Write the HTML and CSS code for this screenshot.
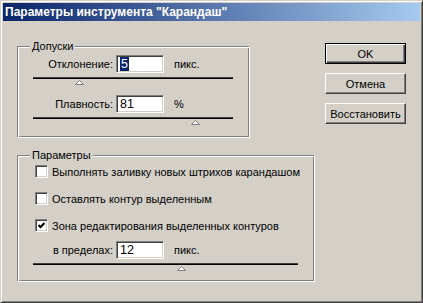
FILE: index.html
```html
<!DOCTYPE html>
<html lang="ru">
<head>
    <meta charset="UTF-8">
    <title>Параметры инструмента "Карандаш"</title>
    <link rel="stylesheet" href="styles.css">
</head>
<body>

    <div class="window">
        <div class="titlebar">Параметры инструмента "Карандаш"</div>

        <div class="dialog">
            <div class="groups">
                <!-- Tolerances -->
                <div class="group group-tolerance">
                    <div class="group-title">Допуски</div>

                    <div class="field-row first-row">
                        <span class="field-label">Отклонение:</span>
                        <div class="edit"><span class="selected">5</span></div>
                        <span class="unit">пикс.</span>
                    </div>
                    <div class="slider">
                        <span class="thumb" style="left: 23%"><svg width="9" height="5" viewBox="0 0 9 5"><polygon points="0.5,4.5 4.5,0.5 8.5,4.5" fill="#fff" stroke="#808080"/></svg></span>
                    </div>

                    <div class="field-row">
                        <span class="field-label">Плавность:</span>
                        <div class="edit">81</div>
                        <span class="unit">%</span>
                    </div>
                    <div class="slider">
                        <span class="thumb" style="left: 81%"><svg width="9" height="5" viewBox="0 0 9 5"><polygon points="0.5,4.5 4.5,0.5 8.5,4.5" fill="#fff" stroke="#808080"/></svg></span>
                    </div>
                </div>

                <!-- Options -->
                <div class="group group-params">
                    <div class="group-title">Параметры</div>

                    <div class="check-row first-row">
                        <span class="checkbox"></span>
                        <span>Выполнять заливку новых штрихов карандашом</span>
                    </div>
                    <div class="check-row">
                        <span class="checkbox"></span>
                        <span>Оставлять контур выделенным</span>
                    </div>
                    <div class="check-row">
                        <span class="checkbox checked"><svg width="7" height="7" viewBox="0 0 7 7"><polyline points="0.5,3 2.5,5 6.5,1" fill="none" stroke="#000" stroke-width="2"/></svg></span>
                        <span>Зона редактирования выделенных контуров</span>
                    </div>

                    <div class="field-row range-row">
                        <span class="field-label">в пределах:</span>
                        <div class="edit">12</div>
                        <span class="unit">пикс.</span>
                    </div>
                    <div class="slider">
                        <span class="thumb" style="left: 56%"><svg width="9" height="5" viewBox="0 0 9 5"><polygon points="0.5,4.5 4.5,0.5 8.5,4.5" fill="#fff" stroke="#808080"/></svg></span>
                    </div>
                </div>
            </div>

            <div class="buttons">
                <button class="btn btn-default">OK</button>
                <button class="btn">Отмена</button>
                <button class="btn">Восстановить</button>
            </div>
        </div>
    </div>

</body>
</html>
```

FILE: styles.css
```css
/* Reset */
* {
    box-sizing: border-box;
    margin: 0;
    padding: 0;
}

body {
    font-family: "Liberation Sans", Arial, sans-serif;
    font-size: 11px;
    color: #000;
    background-color: #d4d0c8;
}

/* Window frame */
.window {
    width: 423px;
    height: 303px;
    padding: 2px;
    border: 1px solid;
    border-color: #d4d0c8 #404040 #404040 #d4d0c8;
    box-shadow: inset 1px 1px 0 #fff, inset -1px -1px 0 #808080;
    background-color: #d4d0c8;
}

.titlebar {
    height: 18px;
    line-height: 18px;
    padding-left: 2px;
    background: linear-gradient(to right, #0a246a, #a6caf0);
    color: #fff;
    font-weight: bold;
    font-size: 12px;
    white-space: nowrap;
}

/* Dialog body */
.dialog {
    display: flex;
    padding: 22px 0 0 14px;
}

.groups {
    padding-top: 3px;
}

/* Etched group box */
.group {
    position: relative;
    border: 1px solid #808080;
    padding: 0 15px;
}

.group::before {
    content: "";
    position: absolute;
    top: 0;
    left: 0;
    right: -2px;
    bottom: -2px;
    border: 1px solid #fff;
}

.group-title {
    position: relative;
    z-index: 1;
    display: table;
    margin: -7px 0 0 -3px;
    padding: 0 2px;
    line-height: 13px;
    background-color: #d4d0c8;
}

.group-tolerance {
    width: 232px;
    height: 91px;
}

.group-params {
    width: 297px;
    height: 126px;
    margin-top: 18px;
}

/* Edit rows */
.field-row {
    display: flex;
    align-items: center;
    margin-top: 16px;
}

.field-row.first-row {
    margin-top: 2px;
}

.field-row.range-row {
    margin-top: 9px;
}

.field-label {
    width: 80px;
    text-align: right;
    margin-right: 3px;
}

.edit {
    width: 48px;
    height: 18px;
    padding: 1px 0 0 3px;
    border: 1px solid;
    border-color: #808080 #fff #fff #808080;
    box-shadow: inset 1px 1px 0 #404040, inset -1px -1px 0 #d4d0c8;
    background-color: #fff;
    font-size: 12.5px;
    line-height: 14px;
}

.selected {
    background-color: #0a246a;
    color: #fff;
    padding: 0 1px;
}

.unit {
    margin-left: 10px;
}

/* Slider track */
.slider {
    position: relative;
    height: 2px;
    margin-top: 4px;
    border-top: 1px solid #404040;
    border-bottom: 1px solid #000;
}

.thumb {
    position: absolute;
    top: 2px;
    margin-left: -4px;
    line-height: 0;
}

/* Checkboxes */
.check-row {
    display: flex;
    align-items: center;
    height: 13px;
    margin-top: 14px;
    white-space: nowrap;
}

.check-row.first-row {
    margin-top: 3px;
}

.checkbox {
    display: flex;
    align-items: center;
    justify-content: center;
    flex-shrink: 0;
    width: 13px;
    height: 13px;
    margin: 0 4px 0 2px;
    border: 1px solid;
    border-color: #808080 #fff #fff #808080;
    box-shadow: inset 1px 1px 0 #404040, inset -1px -1px 0 #d4d0c8;
    background-color: #fff;
}

/* Buttons */
.buttons {
    display: flex;
    flex-direction: column;
    gap: 9px;
    margin-left: 11px;
}

.btn {
    width: 81px;
    height: 21px;
    font-family: inherit;
    font-size: 11px;
    color: #000;
    background-color: #d4d0c8;
    border: 1px solid;
    border-color: #fff #404040 #404040 #fff;
    box-shadow: inset -1px -1px 0 #808080;
}

.btn-default {
    border: 1px solid #000;
    box-shadow: inset 1px 1px 0 #fff, inset -1px -1px 0 #404040, inset -2px -2px 0 #808080;
}
```
